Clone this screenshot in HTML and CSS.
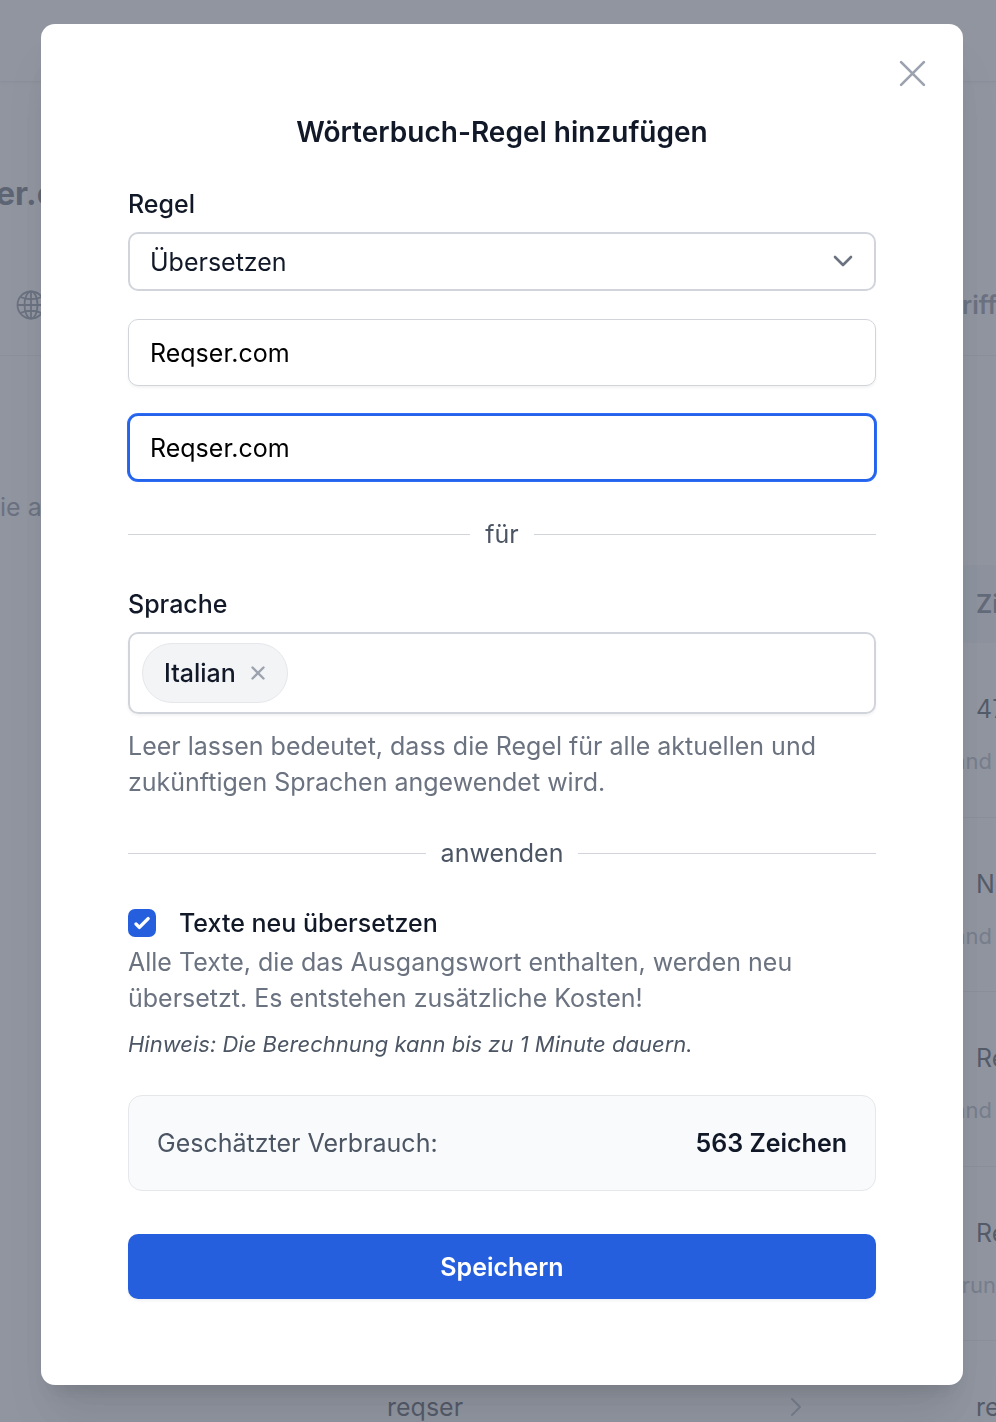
FILE: index.html
```html
<!DOCTYPE html>
<html lang="de">
<head>
  <meta charset="UTF-8">
  <meta name="viewport" content="width=device-width, initial-scale=1.0">
  <title>Wörterbuch-Regel hinzufügen</title>
  <link rel="stylesheet" href="styles.css">
</head>
<body>
  <div class="page" aria-hidden="true">
    <div class="topbar"></div>
    <h1 class="page-title">er.com</h1>
    <div class="tabs">
      <svg class="globe" viewBox="0 0 30 30" fill="none" stroke="currentColor" stroke-width="1.8">
        <circle cx="15" cy="15" r="13.5"/>
        <ellipse cx="15" cy="15" rx="6.5" ry="13.5"/>
        <path d="M15 1.5v27M1.5 15h27M4.5 7c6 3 15 3 21 0M4.5 23c6-3 15-3 21 0"/>
      </svg>
      <span class="tab">riff</span>
    </div>
    <p class="intro">ie a</p>
    <table class="texts">
      <thead>
        <tr><th class="col-first"></th><th class="col-source"></th><th class="col-arrow"></th><th>Zi</th></tr>
      </thead>
      <tbody>
        <tr><td></td><td></td><td></td><td>47</td></tr>
        <tr class="note"><td colspan="4">and</td></tr>
        <tr><td></td><td></td><td></td><td>Ne</td></tr>
        <tr class="note"><td colspan="4">and</td></tr>
        <tr><td></td><td></td><td></td><td>Re</td></tr>
        <tr class="note"><td colspan="4">and</td></tr>
        <tr><td></td><td></td><td></td><td>Re</td></tr>
        <tr class="note flush"><td colspan="4">run</td></tr>
        <tr>
          <td></td>
          <td>reqser</td>
          <td><svg class="arrow" viewBox="0 0 12 20" fill="none" stroke="currentColor" stroke-width="2" stroke-linecap="round" stroke-linejoin="round"><path d="M2 2l8 8-8 8"/></svg></td>
          <td>re</td>
        </tr>
      </tbody>
    </table>
  </div>

  <div class="overlay">
    <form class="modal" role="dialog" aria-labelledby="modal-title">
      <button type="button" class="close-button" aria-label="Schließen">
        <svg viewBox="0 0 28 28" fill="none" stroke="currentColor" stroke-width="2.6" stroke-linecap="round"><path d="M3 3l22 22M25 3L3 25"/></svg>
      </button>

      <h2 class="modal-title" id="modal-title">Wörterbuch-Regel hinzufügen</h2>

      <label class="field-label" for="rule">Regel</label>
      <div class="select-wrap">
        <select class="select" id="rule">
          <option>Übersetzen</option>
        </select>
        <svg class="chevron" viewBox="0 0 20 12" fill="none" stroke="currentColor" stroke-width="2.6" stroke-linecap="round" stroke-linejoin="round"><path d="M2 2l8 8 8-8"/></svg>
      </div>

      <input class="text-input" type="text" value="Reqser.com" aria-label="Ausgangswort">
      <input class="text-input active" type="text" value="Reqser.com" aria-label="Übersetzung">

      <div class="divider">für</div>

      <label class="field-label" for="language">Sprache</label>
      <div class="tag-field">
        <span class="tag">
          Italian
          <button type="button" class="tag-remove" aria-label="Italian entfernen">
            <svg viewBox="0 0 16 16" fill="none" stroke="currentColor" stroke-width="2.4" stroke-linecap="round"><path d="M2.5 2.5l11 11M13.5 2.5l-11 11"/></svg>
          </button>
        </span>
        <input class="tag-input" id="language" type="text">
      </div>
      <p class="help">Leer lassen bedeutet, dass die Regel für alle aktuellen und zukünftigen Sprachen angewendet wird.</p>

      <div class="divider">anwenden</div>

      <div class="check-row">
        <span class="check-wrap">
          <input class="checkbox" id="retranslate" type="checkbox" checked>
          <svg class="check-icon" viewBox="0 0 16 16" fill="currentColor"><path d="M12.2 4.8a1 1 0 0 1 0 1.4l-5 5a1 1 0 0 1-1.4 0l-2-2a1 1 0 0 1 1.4-1.4l1.3 1.3 4.3-4.3a1 1 0 0 1 1.4 0z"/></svg>
        </span>
        <label for="retranslate">Texte neu übersetzen</label>
      </div>
      <p class="check-help">Alle Texte, die das Ausgangswort enthalten, werden neu übersetzt. Es entstehen zusätzliche Kosten!</p>
      <p class="hint">Hinweis: Die Berechnung kann bis zu 1 Minute dauern.</p>

      <div class="usage">
        <span>Geschätzter Verbrauch:</span>
        <strong>563 Zeichen</strong>
      </div>

      <button type="submit" class="save-button">Speichern</button>
    </form>
  </div>
</body>
</html>
```
FILE: styles.css
```css
* {
  box-sizing: border-box;
}

body {
  margin: 0;
  font-family: Inter, "Liberation Sans", sans-serif;
  font-size: 25px;
  line-height: 36px;
  color: #111827;
  background-color: #ffffff;
}

h1, h2, p {
  margin: 0;
}

button, input, select {
  font: inherit;
}

svg {
  display: block;
}

/* Page behind the dialog */
.page {
  height: 100vh;
  overflow: hidden;
  white-space: nowrap;
}

.topbar {
  height: 82px;
  border-bottom: 1px solid #e5e7eb;
  box-shadow: 0 2px 4px rgba(0, 0, 0, 0.06);
}

.page-title {
  margin-top: 94px;
  font-size: 32px;
  text-indent: -4px;
  color: #374151;
}

.tabs {
  display: flex;
  justify-content: space-between;
  align-items: center;
  height: 102px;
  margin-top: 42px;
  padding-left: 16px;
  border-bottom: 1px solid #e5e7eb;
  color: #6b7280;
}

.globe {
  width: 30px;
  height: 30px;
}

.tab {
  width: 34px;
  font-weight: 600;
}

.intro {
  margin: 133px 0 40px;
  color: #6b7280;
}

.texts {
  width: calc(100% - 60px);
  margin-left: 60px;
  table-layout: fixed;
  border-collapse: collapse;
}

.texts th {
  height: 78px;
  padding: 0;
  text-align: left;
  font-weight: 600;
  color: #4b5563;
  background-color: #f3f4f6;
}

.col-first {
  width: 327px;
}

.col-source {
  width: 403px;
}

.col-arrow {
  width: 186px;
}

.texts td {
  height: 84px;
  padding: 48px 0 0;
}

.texts .note td {
  height: 90px;
  padding: 16px 4px 37px 0;
  border-bottom: 1px solid #e5e7eb;
  font-size: 22px;
  text-align: right;
  color: #9ca3af;
}

.texts .flush td {
  padding-right: 0;
}

.arrow {
  width: 12px;
  height: 20px;
  color: #9ca3af;
}

/* Dialog */
.overlay {
  position: fixed;
  inset: 0;
  overflow: hidden;
  padding: 24px 33px 24px 41px;
  background-color: rgba(107, 114, 128, 0.75);
}

.modal {
  position: relative;
  display: flex;
  flex-direction: column;
  padding: 88px 87px 86px;
  background-color: #ffffff;
  border-radius: 14px;
  box-shadow: 0 36px 45px -9px rgba(0, 0, 0, 0.1), 0 14px 18px -10px rgba(0, 0, 0, 0.1);
}

.close-button {
  position: absolute;
  top: 35px;
  right: 36px;
  padding: 0;
  border: none;
  background: none;
  color: #9ca3af;
  cursor: pointer;
}

.close-button svg {
  width: 29px;
  height: 29px;
}

.modal-title {
  margin-bottom: 34px;
  font-size: 28px;
  line-height: 40px;
  font-weight: 600;
  text-align: center;
}

.field-label {
  margin-bottom: 10px;
  font-weight: 500;
}

.select-wrap {
  position: relative;
}

.select {
  display: block;
  width: 100%;
  height: 59px;
  padding: 0 60px 0 20px;
  border: 2px solid #d1d5db;
  border-radius: 10px;
  background-color: #ffffff;
  color: #111827;
  appearance: none;
}

.chevron {
  position: absolute;
  top: 23px;
  right: 23px;
  width: 20px;
  height: 12px;
  color: #6b7280;
  pointer-events: none;
}

.text-input {
  width: 100%;
  height: 67px;
  margin-top: 28px;
  padding: 0 21px;
  border: 1px solid #d1d5db;
  border-radius: 10px;
  background-color: #ffffff;
  color: #000000;
  box-shadow: 0 2px 3px rgba(0, 0, 0, 0.05);
  outline: none;
}

.text-input.active {
  padding: 0 20px;
  border: 2px solid #2563eb;
  box-shadow: 0 0 0 1px #2f6df6;
}

.divider {
  display: flex;
  align-items: center;
  gap: 15px;
  margin: 35px 0 34px;
  color: #4b5563;
}

.divider::before,
.divider::after {
  content: "";
  flex: 1;
  height: 1px;
  background-color: #d1d5db;
}

.tag-field {
  display: flex;
  align-items: center;
  height: 82px;
  padding: 0 12px;
  border: 2px solid #d1d5db;
  border-radius: 10px;
  box-shadow: 0 2px 3px rgba(0, 0, 0, 0.05);
}

.tag {
  display: flex;
  align-items: center;
  gap: 14px;
  height: 60px;
  padding: 0 21px;
  border: 1px solid #e5e7eb;
  border-radius: 30px;
  background-color: #f3f4f6;
  font-weight: 500;
}

.tag-remove {
  padding: 0;
  border: none;
  background: none;
  color: #9ca3af;
  cursor: pointer;
}

.tag-remove svg {
  width: 16px;
  height: 16px;
}

.tag-input {
  flex: 1;
  min-width: 0;
  border: none;
  outline: none;
  background: none;
}

.help {
  margin-top: 14px;
  color: #6b7280;
}

.check-row {
  display: flex;
  align-items: center;
  gap: 23px;
  font-weight: 500;
}

.check-wrap {
  position: relative;
}

.checkbox {
  display: block;
  width: 28px;
  height: 28px;
  margin: 0;
  border-radius: 7px;
  background-color: #265fde;
  appearance: none;
}

.check-icon {
  position: absolute;
  inset: 0;
  width: 28px;
  height: 28px;
  color: #ffffff;
  pointer-events: none;
}

.check-help {
  margin-top: 3px;
  color: #6b7280;
}

.hint {
  margin-top: 12px;
  font-size: 22px;
  line-height: 32px;
  font-style: italic;
  color: #4b5563;
}

.usage {
  display: flex;
  justify-content: space-between;
  align-items: center;
  height: 96px;
  margin-top: 35px;
  padding: 0 28px;
  border: 1px solid #e5e7eb;
  border-radius: 14px;
  background-color: #f9fafb;
  color: #4b5563;
}

.usage strong {
  font-weight: 600;
  color: #111827;
}

.save-button {
  height: 65px;
  margin-top: 43px;
  border: none;
  border-radius: 10px;
  background-color: #265fde;
  color: #ffffff;
  font-weight: 600;
  box-shadow: 0 2px 3px rgba(0, 0, 0, 0.05);
  cursor: pointer;
}
```
